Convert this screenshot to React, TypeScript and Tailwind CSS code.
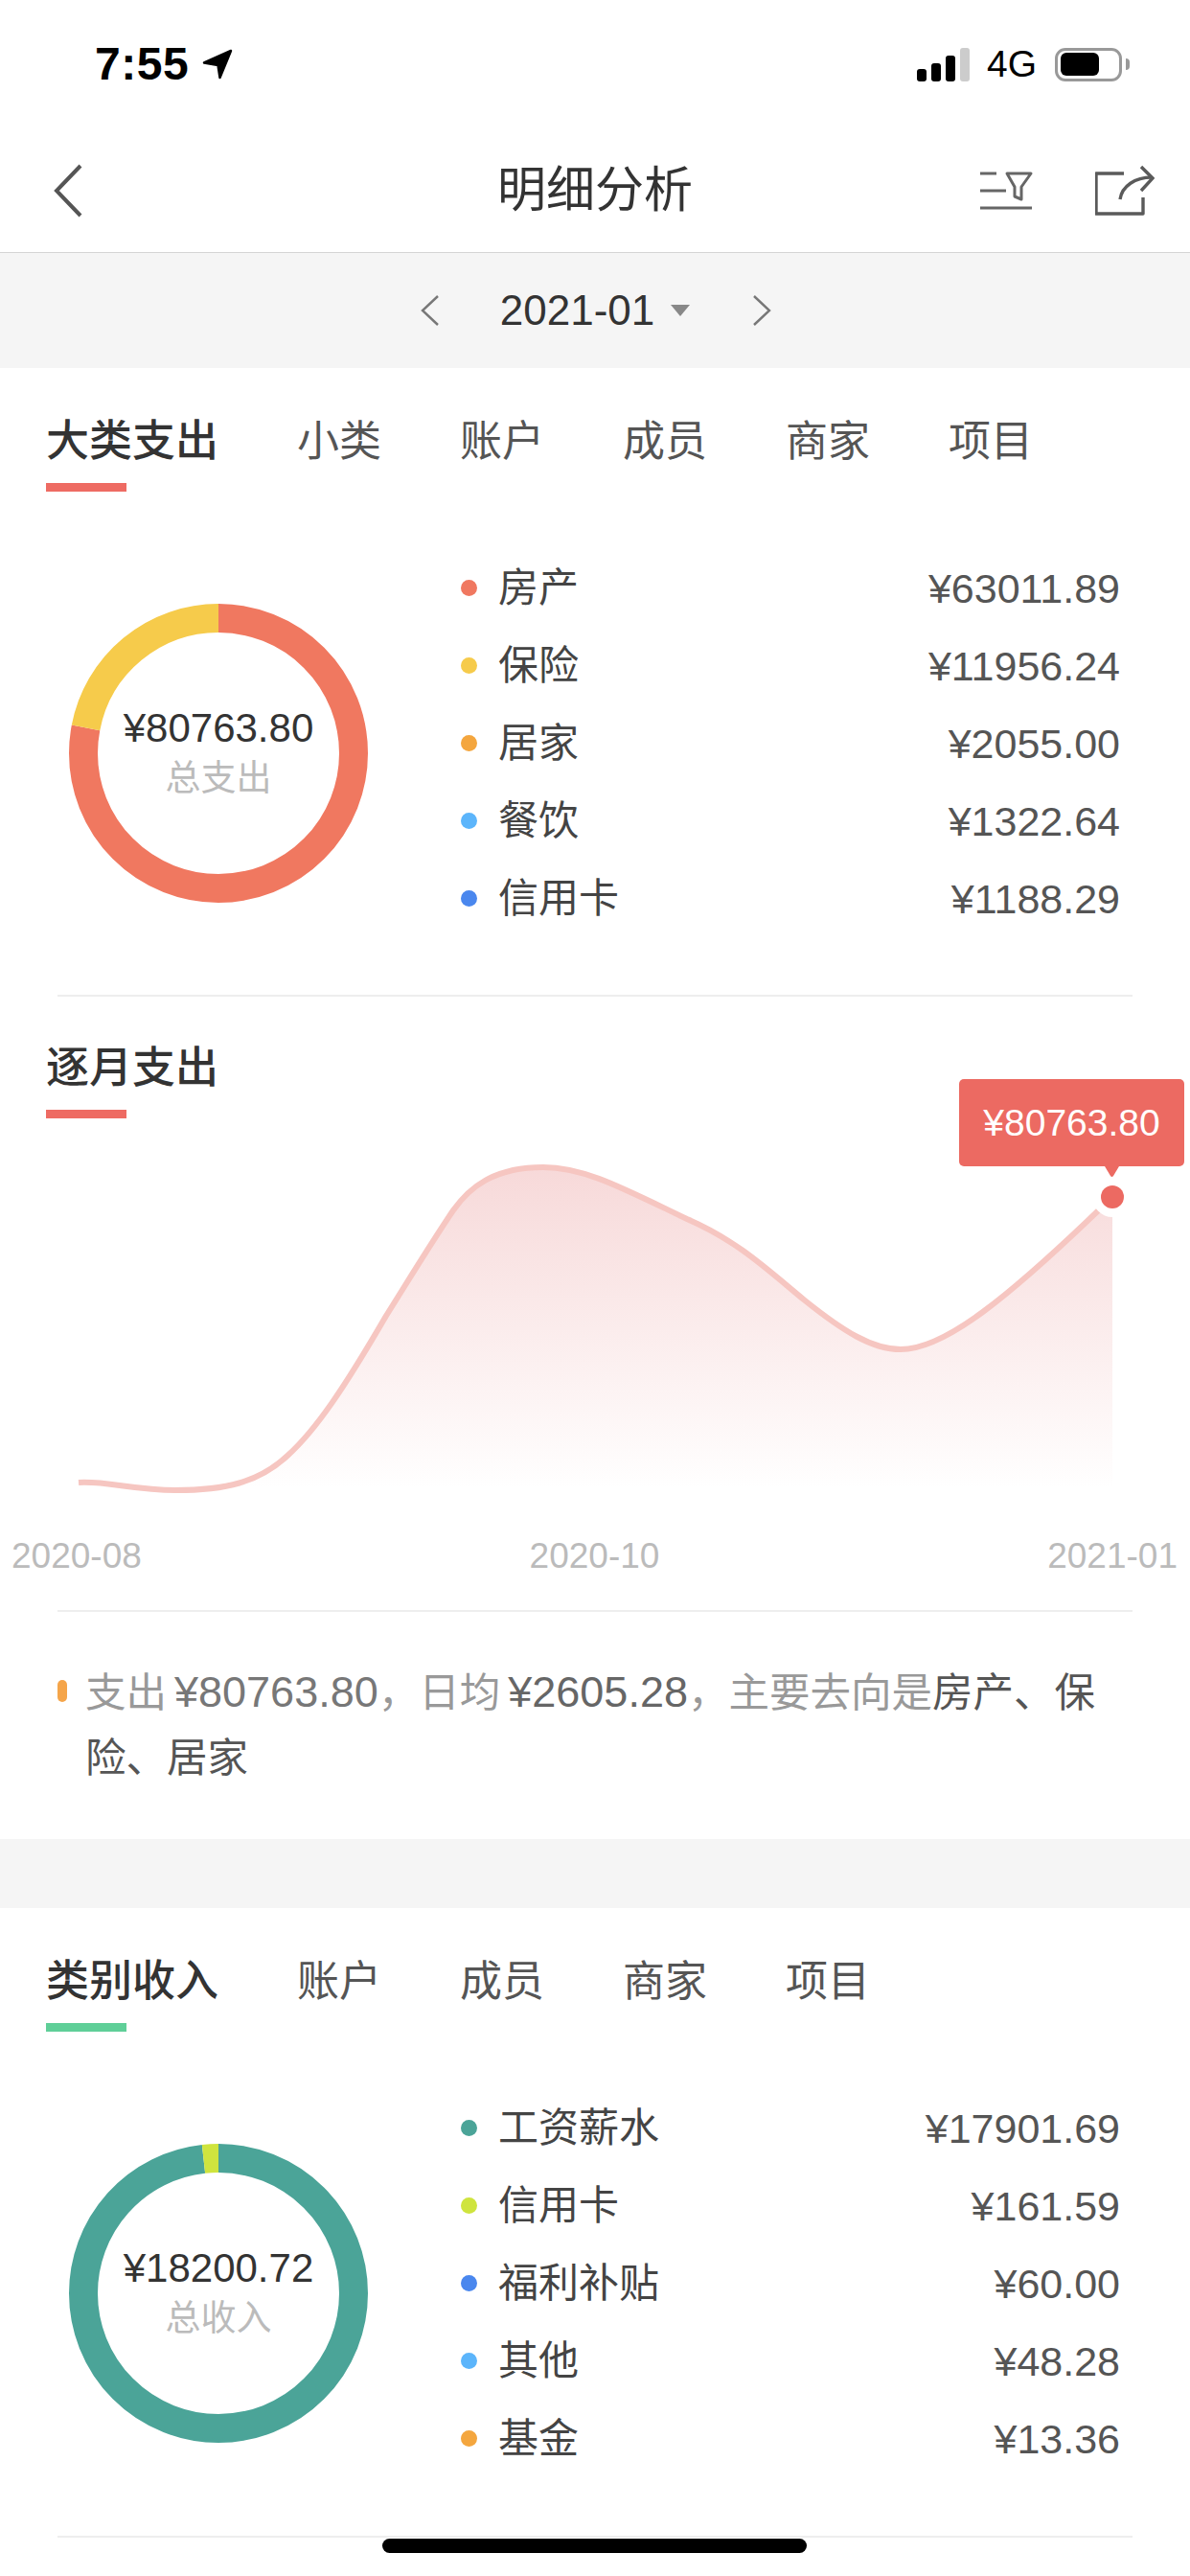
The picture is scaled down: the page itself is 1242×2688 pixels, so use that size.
const expenseRows = [
  { name: '房产', value: '¥63011.89', dot: 'bg-[#f07860]' },
  { name: '保险', value: '¥11956.24', dot: 'bg-[#f6cb4b]' },
  { name: '居家', value: '¥2055.00', dot: 'bg-[#f4a63e]' },
  { name: '餐饮', value: '¥1322.64', dot: 'bg-[#5cb5fb]' },
  { name: '信用卡', value: '¥1188.29', dot: 'bg-[#4a87ee]' },
];

const incomeRows = [
  { name: '工资薪水', value: '¥17901.69', dot: 'bg-[#4ba498]' },
  { name: '信用卡', value: '¥161.59', dot: 'bg-[#cfe43e]' },
  { name: '福利补贴', value: '¥60.00', dot: 'bg-[#4a87ee]' },
  { name: '其他', value: '¥48.28', dot: 'bg-[#5cb5fb]' },
  { name: '基金', value: '¥13.36', dot: 'bg-[#f4a63e]' },
];

// y measured from the top of the chart box
const curve =
  'M82 380C110 378 140 388 183 388C235 388 270 380 300 352C330 325 360 280 403 206C430 163 450 130 473 96C490 72 515 51 567 51C610 51 650 73 717 105C770 128 800 157 840 190C880 222 910 241 940 241C985 241 1050 190 1161 82';

function Chevron({ dir, className }: { dir: 'left' | 'right'; className: string }) {
  return (
    <svg viewBox="0 0 20 32" fill="none" className={className}>
      <path d={dir === 'left' ? 'M18 1L2 16L18 31' : 'M2 1L18 16L2 31'} stroke="currentColor" strokeWidth="2.4" />
    </svg>
  );
}

function StatusBar() {
  return (
    <div className="flex h-[134px] items-center justify-between pl-[99px] pr-[63px]">
      <div className="flex items-center gap-[14px]">
        <span className="text-[48px] font-semibold leading-[52px] tracking-[0.5px] text-black">7:55</span>
        <svg viewBox="0 0 32 32" className="h-[32px] w-[32px]">
          <path d="M30 2L2 14.5L16.5 17L18.5 30Z" fill="#000" stroke="#000" strokeWidth="2.5" strokeLinejoin="round" />
        </svg>
      </div>
      <div className="flex items-center">
        <div className="flex h-[35px] items-end gap-[5px]">
          <div className="h-[13px] w-[10px] rounded-[3px] bg-black" />
          <div className="h-[19px] w-[10px] rounded-[3px] bg-black" />
          <div className="h-[27px] w-[10px] rounded-[3px] bg-black" />
          <div className="h-[35px] w-[10px] rounded-[3px] bg-[#cccccc]" />
        </div>
        <span className="ml-[18px] text-[39px] leading-[40px] text-black">4G</span>
        <div className="ml-[19px] flex h-[35px] w-[70px] items-center rounded-[11px] border-[3px] border-[#999999] pl-[3px]">
          <div className="h-[24px] w-[40px] rounded-[6px] bg-black" />
        </div>
        <div className="ml-[4px] h-[12px] w-[4px] rounded-r-[4px] bg-[#999999]" />
      </div>
    </div>
  );
}

function NavBar() {
  return (
    <div className="flex h-[130px] items-center justify-between border-b border-[#d4d4d4]">
      <div className="w-[200px] pl-[56px]">
        <svg viewBox="0 0 30 56" fill="none" className="h-[56px] w-[30px]">
          <path d="M28 2L3 28L28 54" stroke="#555555" strokeWidth="4" />
        </svg>
      </div>
      <h1 className="text-[51px] font-normal leading-[60px] text-[#333333]">明细分析</h1>
      <div className="flex w-[200px] items-center justify-end gap-[65px] pr-[37px]">
        <svg viewBox="0 0 56 42" fill="none" stroke="#666666" strokeWidth="3" className="h-[42px] w-[56px] shrink-0">
          <path d="M1 3H18M1 21H28M1 39H55" />
          <path d="M29 3H54L44 17V30L37 27V17Z" strokeLinejoin="round" />
        </svg>
        <svg viewBox="0 0 62 53" fill="none" stroke="#5a5a5a" strokeWidth="3.4" className="h-[53px] w-[62px] shrink-0">
          <path d="M30 9H1V51H50V34" strokeLinejoin="round" />
          <path d="M26 36C28 22 42 13 59 13" />
          <path d="M48 2L60 14L48 27" />
        </svg>
      </div>
    </div>
  );
}

function DateBar() {
  return (
    <div className="flex h-[120px] items-center justify-center bg-[#f5f5f5] pl-[2px]">
      <Chevron dir="left" className="h-[32px] w-[20px] text-[#777777]" />
      <span className="ml-[63px] text-[44px] leading-[60px] text-[#333333]">2021-01</span>
      <div className="ml-[17px] h-0 w-0 border-x-[10px] border-t-[12px] border-x-transparent border-t-[#888888]" />
      <Chevron dir="right" className="ml-[65px] h-[32px] w-[20px] text-[#777777]" />
    </div>
  );
}

function Tabs({ title, items, bar, topPad, barGap }: { title: string; items: string[]; bar: string; topPad: string; barGap: string }) {
  return (
    <div className={`pl-[48px] ${topPad}`}>
      <div className="flex h-[60px] items-center gap-[82px]">
        <span className="text-[45px] font-medium leading-[60px] text-[#333333]">{title}</span>
        {items.map((t) => (
          <span key={t} className="text-[44px] leading-[60px] text-[#555555]">{t}</span>
        ))}
      </div>
      <div className={`h-[9px] w-[84px] ${bar} ${barGap}`} />
    </div>
  );
}

function Donut({ stops, amount, label }: { stops: { color: string; pct: number }[]; amount: string; label: string }) {
  const r = 141;
  const circ = 2 * Math.PI * r;
  let offset = 0;
  return (
    <div className="relative mt-[57px] h-[312px] w-[312px] shrink-0">
      <svg viewBox="0 0 312 312" className="h-[312px] w-[312px] -rotate-90">
        {stops.map((s) => {
          const el = (
            <circle
              key={s.color}
              cx="156"
              cy="156"
              r={r}
              fill="none"
              stroke={s.color}
              strokeWidth="30"
              strokeDasharray={`${(circ * s.pct) / 100} ${circ}`}
              strokeDashoffset={(-circ * offset) / 100}
            />
          );
          offset += s.pct;
          return el;
        })}
      </svg>
      <div className="absolute inset-0 flex flex-col items-center justify-center">
        <span className="text-[42px] leading-[50px] text-[#333333]">{amount}</span>
        <span className="pt-[3px] text-[37px] leading-[50px] text-[#bbbbbb]">{label}</span>
      </div>
    </div>
  );
}

function Breakdown({ rows, stops, amount, label }: { rows: typeof expenseRows; stops: { color: string; pct: number }[]; amount: string; label: string }) {
  return (
    <div className="mt-[60px] flex items-start pl-[72px] pr-[73px]">
      <Donut stops={stops} amount={amount} label={label} />
      <div className="ml-[97px] flex-1">
        {rows.map((row) => (
          <div key={row.name} className="flex h-[81px] items-center">
            <div className={`h-[17px] w-[17px] rounded-full ${row.dot}`} />
            <span className="ml-[22px] text-[42px] leading-[60px] text-[#444444]">{row.name}</span>
            <span className="ml-auto text-[43px] leading-[60px] text-[#555555]">{row.value}</span>
          </div>
        ))}
      </div>
    </div>
  );
}

function Divider() {
  return <div className="mx-[60px] h-[2px] bg-[#eeeeee]" />;
}

function MonthlyChart() {
  return (
    <div className="relative">
      <svg viewBox="0 0 1242 435" className="block h-[435px] w-[1242px]">
        <defs>
          <linearGradient id="areaFill" x1="0" y1="0" x2="0" y2="1">
            <stop offset="0%" stopColor="#f7d9d9" />
            <stop offset="100%" stopColor="#ffffff" />
          </linearGradient>
        </defs>
        <path d={`${curve}L1161 384L200 384Z`} fill="url(#areaFill)" />
        <path d={curve} fill="none" stroke="#f6c6c1" strokeWidth="6" />
        <circle cx="1161" cy="82" r="21" fill="#ffffff" />
        <circle cx="1161" cy="82" r="12" fill="#ec6a62" />
        <path d="M1153 50H1168L1162 60Q1160.500 62 1159 60Z" fill="#ec6a62" />
      </svg>
      <div className="absolute right-[6px] top-[-41px] flex h-[91px] w-[235px] items-center justify-center rounded-[5px] bg-[#ec6a62]">
        <span className="text-[39px] leading-[50px] text-white">¥80763.80</span>
      </div>
      <div className="flex h-[44px] items-center justify-between pl-[12px] pr-[13px] text-[37px] leading-[44px] text-[#bbbbbb]">
        <span>2020-08</span>
        <span>2020-10</span>
        <span>2021-01</span>
      </div>
    </div>
  );
}

function Summary() {
  return (
    <div className="flex pb-[50px] pl-[60px] pr-[62px] pt-[50px]">
      <div className="mt-[21px] h-[23px] w-[10px] shrink-0 rounded-full bg-[#f5a54a]" />
      <p className="ml-[19px] text-[42.5px] leading-[68px]">
        <span className="text-[#999999]">支出</span>
        <span className="pl-[8px] text-[45px] text-[#777777]">¥80763.80</span>
        <span className="text-[#999999]">，日均</span>
        <span className="pl-[8px] text-[45px] text-[#666666]">¥2605.28</span>
        <span className="text-[#999999]">，主要去向是</span>
        <span className="text-[#555555]">房产、保</span>
        <span className="text-[#555555]">险、居家</span>
      </p>
    </div>
  );
}

export default function App() {
  return (
    <div className="relative h-[2688px] w-[1242px] overflow-hidden bg-white font-['Liberation_Sans','Noto_Sans_CJK_SC',sans-serif]">
      <StatusBar />
      <NavBar />
      <DateBar />

      <Tabs title="大类支出" items={['小类', '账户', '成员', '商家', '项目']} bar="bg-[#ee6b63]" topPad="pt-[47px]" barGap="mt-[13px]" />
      <Breakdown
        rows={expenseRows}
        stops={[{ color: '#f07860', pct: 78 }, { color: '#f6cb4b', pct: 22 }]}
        amount="¥80763.80"
        label="总支出"
      />
      <div className="mt-[60px]">
        <Divider />
      </div>

      <div className="pl-[48px] pt-[45px]">
        <h2 className="text-[45px] font-medium leading-[60px] text-[#333333]">逐月支出</h2>
        <div className="mt-[13px] h-[9px] w-[84px] bg-[#ee6b63]" />
      </div>
      <MonthlyChart />
      <div className="mt-[34px]">
        <Divider />
      </div>
      <Summary />

      <div className="h-[72px] bg-[#f5f5f5]" />

      <Tabs title="类别收入" items={['账户', '成员', '商家', '项目']} bar="bg-[#5fcf98]" topPad="pt-[47px]" barGap="mt-[13px]" />
      <Breakdown
        rows={incomeRows}
        stops={[{ color: '#4ba498', pct: 98.2 }, { color: '#cfe43e', pct: 1.8 }]}
        amount="¥18200.72"
        label="总收入"
      />
      <div className="mt-[61px]">
        <Divider />
      </div>

      <div className="absolute bottom-[24px] left-[399px] h-[15px] w-[443px] rounded-full bg-black" />
    </div>
  );
}
